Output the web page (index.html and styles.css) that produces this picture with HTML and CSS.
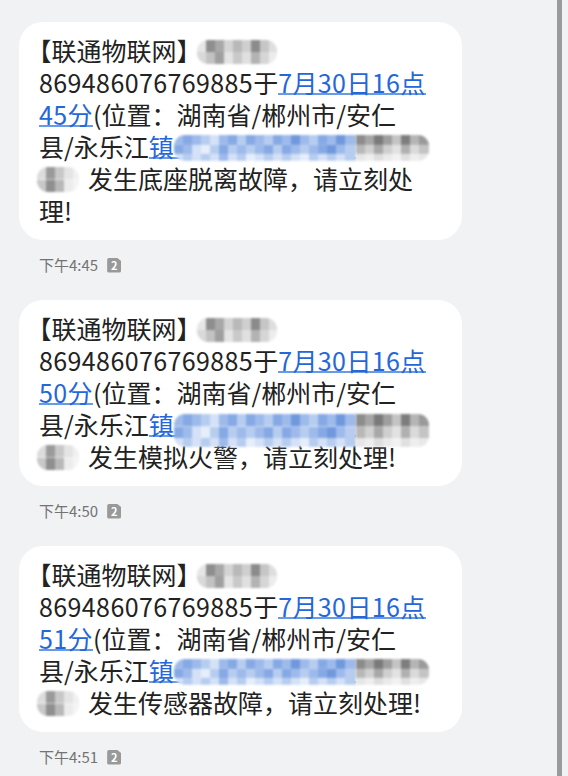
FILE: index.html
```html
<!DOCTYPE html>
<html lang="zh-CN">
<head>
  <meta charset="UTF-8">
  <meta name="viewport" content="width=device-width, initial-scale=1.0">
  <title>短信</title>
  <link rel="stylesheet" href="styles.css">
</head>
<body>
  <div class="screen">
    <div class="thread">

      <div class="msg">
        <div class="bubble">
          <span class="brand">【联通物联网】</span><span class="mosaic m-name"></span><br>
          <span class="num">869486076769885</span>于<span class="link num">7月30日16点<br>45分</span>(位置：湖南省/郴州市/安仁<br>
          县/永乐江<span class="link">镇<span class="mosaic m-addr"></span></span><span class="mosaic m-grey"></span><br>
          <span class="mosaic m-tail"></span>发生底座脱离故障，请立刻处<br>
          理!
        </div>
        <div class="meta">下午4:45<span class="sim">2</span></div>
      </div>

      <div class="msg">
        <div class="bubble">
          <span class="brand">【联通物联网】</span><span class="mosaic m-name"></span><br>
          <span class="num">869486076769885</span>于<span class="link num">7月30日16点<br>50分</span>(位置：湖南省/郴州市/安仁<br>
          县/永乐江<span class="link">镇<span class="mosaic m-addr deep"></span></span><span class="mosaic m-grey deep"></span><br>
          <span class="mosaic m-tail"></span>发生模拟火警，请立刻处理!
        </div>
        <div class="meta">下午4:50<span class="sim">2</span></div>
      </div>

      <div class="msg">
        <div class="bubble">
          <span class="brand">【联通物联网】</span><span class="mosaic m-name"></span><br>
          <span class="num">869486076769885</span>于<span class="link num">7月30日16点<br>51分</span>(位置：湖南省/郴州市/安仁<br>
          县/永乐江<span class="link">镇<span class="mosaic m-addr"></span></span><span class="mosaic m-grey"></span><br>
          <span class="mosaic m-tail"></span>发生传感器故障，请立刻处理!
        </div>
        <div class="meta">下午4:51<span class="sim">2</span></div>
      </div>

    </div>
    <div class="edge"></div>
  </div>
</body>
</html>
```

FILE: styles.css
```css
html, body {
  overflow: hidden;
}
body {
  margin: 0;
  background: #f1f2f4;
  font-family: "Noto Sans CJK SC", "Noto Sans", sans-serif;
  color: #222;
}
.screen {
  display: flex;
  min-height: 100vh;
}
.thread {
  width: 557px;
  padding: 22px 0 0 19px;
  box-sizing: border-box;
}
.edge {
  width: 5px;
  background: #9b9b9b;
}

.bubble {
  width: 443px;
  box-sizing: border-box;
  padding: 12px 20px 14px;
  background: #fff;
  border-radius: 24px;
  font-size: 25px;
  line-height: 32px;
  white-space: nowrap;
  text-spacing-trim: space-all;
}
.brand {
  font-feature-settings: "halt";
}
.num {
  letter-spacing: 0.4px;
}
.link {
  color: #2467da;
  background-image: linear-gradient(#6a9ae6, #6a9ae6);
  background-size: 100% 2px;
  background-position: 0 calc(100% - 5px);
  background-repeat: no-repeat;
}

.meta {
  display: flex;
  align-items: center;
  gap: 9px;
  height: 20px;
  margin: 15px 0 25px 20px;
  font-size: 15px;
  line-height: 20px;
  color: #737373;
}
.sim {
  width: 14px;
  height: 15px;
  border-radius: 2px;
  background: #999;
  color: #fff;
  font-size: 11px;
  font-weight: 700;
  line-height: 15px;
  text-align: center;
  clip-path: polygon(0 0, 68% 0, 100% 24%, 100% 100%, 0 100%);
}

/* blurred mosaic patches, sized so they don't push the line box */
.mosaic {
  display: inline-block;
  vertical-align: baseline;
  border-radius: 11px;
  filter: blur(1.2px);
}
.m-name {
  width: 80px;
  height: 24px;
  margin: -21px 0 -3px 8px;
  background:
    linear-gradient(90deg, #e6e6e6 0 9px, #8e8e8e 9px 18px, #a8a8a8 18px 27px, #d4d4d4 27px 36px, #b9b9b9 36px 45px, #cfcfcf 45px 54px, #8b8b8b 54px 63px, #c6c6c6 63px 72px, #dedede 72px) top / 100% 50% no-repeat,
    linear-gradient(90deg, #d9d9d9 0 9px, #c2c2c2 9px 18px, #9f9f9f 18px 27px, #e4e4e4 27px 36px, #c9c9c9 36px 45px, #e0e0e0 45px 54px, #b3b3b3 54px 63px, #d6d6d6 63px 72px, #ececec 72px) bottom / 100% 50% no-repeat;
}
.m-tail {
  width: 42px;
  height: 25px;
  margin: -22px 9px -3px -2px;
  background:
    linear-gradient(90deg, #dcdcdc 0 9px, #9a9a9a 9px 18px, #c8c8c8 18px 27px, #e4e4e4 27px 36px, #f0f0f0 36px) top / 100% 50% no-repeat,
    linear-gradient(90deg, #c8c8c8 0 9px, #8f8f8f 9px 18px, #b8b8b8 18px 27px, #ececec 27px 36px, #f4f4f4 36px) bottom / 100% 50% no-repeat;
}
.m-addr {
  width: 182px;
  height: 26px;
  margin: -22px 0 -4px;
  border-radius: 11px 0 0 11px;
  background:
    linear-gradient(90deg, #9dbaeb 0 9px, #86a9e4 9px 18px, #9dbaeb 18px 27px, #b7cdf0 27px 36px, #d4e1f6 36px 45px, #9dbaeb 45px 54px, #86a9e4 54px 63px, #b7cdf0 63px 72px, #86a9e4 72px 81px, #9dbaeb 81px 90px, #b7cdf0 90px 99px, #86a9e4 99px 108px, #9dbaeb 108px 117px, #6f98dd 117px 126px, #9dbaeb 126px 135px, #b7cdf0 135px 144px, #86a9e4 144px 153px, #9dbaeb 153px 162px, #6f98dd 162px 171px, #9dbaeb 171px) 0 0 / 100% 38% no-repeat,
    linear-gradient(90deg, #86a9e4 0 9px, #9dbaeb 9px 18px, #d4e1f6 18px 27px, #e6eefa 27px 36px, #b7cdf0 36px 45px, #86a9e4 45px 54px, #b7cdf0 54px 63px, #9dbaeb 63px 72px, #b7cdf0 72px 81px, #9dbaeb 81px 90px, #86a9e4 90px 99px, #b7cdf0 99px 108px, #86a9e4 108px 117px, #9dbaeb 117px 126px, #b7cdf0 126px 135px, #9dbaeb 135px 144px, #86a9e4 144px 153px, #6f98dd 153px 162px, #9dbaeb 162px 171px, #b7cdf0 171px) 0 60% / 100% 34% no-repeat,
    linear-gradient(90deg, #d4e1f6 0 9px, #b7cdf0 9px 18px, #d4e1f6 18px 27px, #b7cdf0 27px 36px, #d4e1f6 36px 45px, #9dbaeb 45px 54px, #d4e1f6 54px 63px, #b7cdf0 63px 72px, #e6eefa 72px 81px, #d4e1f6 81px 90px, #b7cdf0 90px 99px, #d4e1f6 99px 108px, #b7cdf0 108px 117px, #d4e1f6 117px 126px, #e6eefa 126px 135px, #b7cdf0 135px 144px, #d4e1f6 144px 153px, #b7cdf0 153px 162px, #d4e1f6 162px 171px, #b7cdf0 171px) 0 100% / 100% 30% no-repeat;
}
.m-grey {
  width: 73px;
  height: 26px;
  margin: -22px 0 -4px;
  border-radius: 0 11px 11px 0;
  background:
    linear-gradient(90deg, #8c8c8c 0 9px, #a6a6a6 9px 18px, #7a7a7a 18px 27px, #9e9e9e 27px 36px, #c4c4c4 36px 45px, #7d7d7d 45px 54px, #b5b5b5 54px 63px, #9a9a9a 63px) 0 0 / 100% 38% no-repeat,
    linear-gradient(90deg, #b8b8b8 0 9px, #d0d0d0 9px 18px, #a8a8a8 18px 27px, #cfcfcf 27px 36px, #e2e2e2 36px 45px, #b0b0b0 45px 54px, #dadada 54px 63px, #c4c4c4 63px) 0 60% / 100% 34% no-repeat,
    linear-gradient(90deg, #e6e6e6 0 9px, #eeeeee 9px 18px, #dedede 18px 27px, #eaeaea 27px 36px, #f2f2f2 36px 45px, #e0e0e0 45px 54px, #eeeeee 54px 63px, #e8e8e8 63px) 0 100% / 100% 30% no-repeat;
}
.m-addr.deep,
.m-grey.deep {
  height: 33px;
  margin-top: -21px;
  margin-bottom: -12px;
}
```
